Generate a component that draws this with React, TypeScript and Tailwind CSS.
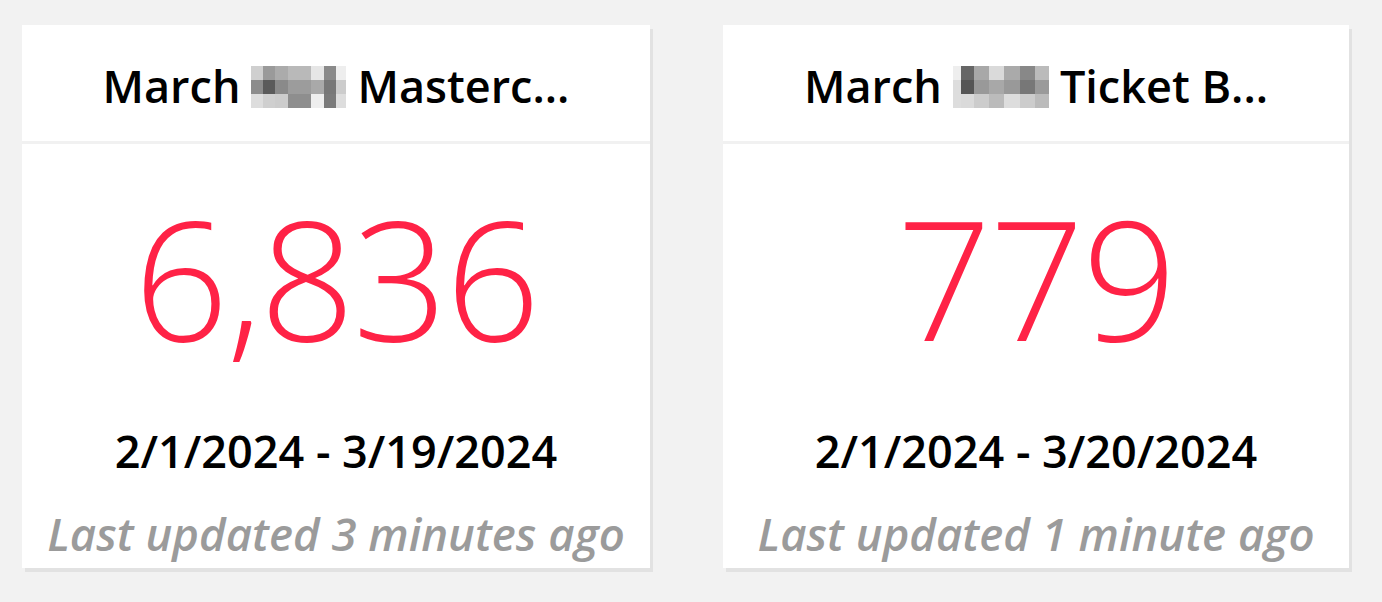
import React from "react";

type Cell = string;

// Redacted word rendered as a coarse pixel mosaic
function Mosaic({ rows, cols }: { rows: Cell[][]; cols: number[] }) {
  return (
    <span className="inline-flex flex-col align-middle mx-[11px] translate-y-[1px]">
      {rows.map((row, r) => (
        <span key={r} className="flex h-[14px]">
          {row.map((c, i) => (
            <span key={i} className="h-full" style={{ background: c, width: cols[i] }} />
          ))}
        </span>
      ))}
    </span>
  );
}

type CardProps = {
  prefix: string;
  suffix: string;
  mosaic: Cell[][];
  cols: number[];
  value: string;
  range: string;
  updated: string;
  width: string;
};

function MetricCard({ prefix, suffix, mosaic, cols, value, range, updated, width }: CardProps) {
  return (
    <div className={`${width} h-[543px] bg-white shadow-[3px_4px_0_#e2e2e2] flex flex-col`}>
      <div className="h-[119px] pt-[5px] flex items-center justify-center border-b-[3px] border-[#f1f1f1]">
        <h2 className="text-[45px] font-semibold text-black leading-none whitespace-nowrap flex items-center">
          <span>{prefix}</span>
          <Mosaic rows={mosaic} cols={cols} />
          <span>{suffix}</span>
        </h2>
      </div>
      <div className="flex-1 flex flex-col items-center">
        <div className="mt-[33px] text-[166px] font-light text-[#ff2246] leading-[200px] tracking-[-2px]">
          {value}
        </div>
        <div className="mt-[51px] text-[45px] font-semibold text-black leading-none whitespace-nowrap">
          {range}
        </div>
        <div className="mt-[38px] text-[45.5px] font-semibold italic text-[#9b9b9b] leading-none whitespace-nowrap">
          {updated}
        </div>
      </div>
    </div>
  );
}

export default function App() {
  return (
    <div
      className="w-[1382px] h-[602px] bg-[#f2f2f2] pt-[25px] pl-[22px] flex gap-[73px]"
      style={{ fontFamily: '"Open Sans", "Noto Sans", sans-serif' }}
    >
      <MetricCard
        width="w-[628px]"
        prefix="March"
        suffix="Masterc..."
        cols={[12, 12, 13, 23, 13, 12, 10]}
        mosaic={[
          ["#cfcfcf", "#9a9a9a", "#ababab", "#b9b9b9", "#e6e6e6", "#8a8a8a", "#eeeeee"],
          ["#8c8c8c", "#5a5a5a", "#8a8a8a", "#9c9c9c", "#a9a9a9", "#777777", "#cccccc"],
          ["#dddddd", "#cfcfcf", "#cccccc", "#8e8e8e", "#eeeeee", "#7a7a7a", "#dddddd"],
        ]}
        value="6,836"
        range="2/1/2024 - 3/19/2024"
        updated="Last updated 3 minutes ago"
      />
      <MetricCard
        width="w-[626px]"
        prefix="March"
        suffix="Ticket B..."
        cols={[8, 13, 15, 15, 16, 15, 14]}
        mosaic={[
          ["#eeeeee", "#666666", "#a8a8a8", "#dadada", "#aaaaaa", "#888888", "#bbbbbb"],
          ["#dddddd", "#555555", "#999999", "#a8a8a8", "#999999", "#777777", "#9a9a9a"],
          ["#dddddd", "#dadada", "#cccccc", "#bbbbbb", "#dddddd", "#cccccc", "#bbbbbb"],
        ]}
        value="779"
        range="2/1/2024 - 3/20/2024"
        updated="Last updated 1 minute ago"
      />
    </div>
  );
}
